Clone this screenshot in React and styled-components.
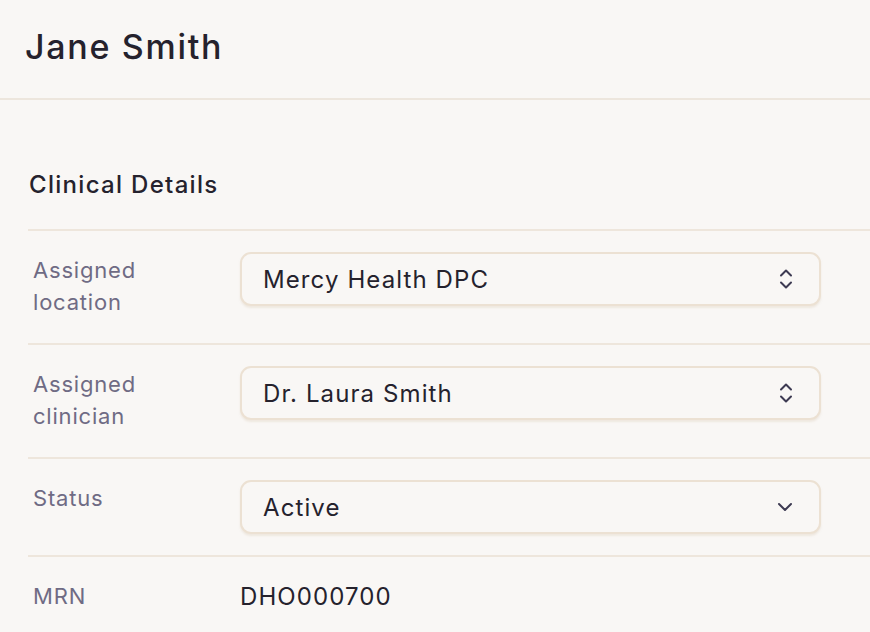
import React from "react";
import styled, { createGlobalStyle } from "styled-components";

const Global = createGlobalStyle`
  html, body { margin: 0; padding: 0; background: #f9f7f5; }
  body { font-family: Inter, "Noto Sans", sans-serif; color: #25222d; }
`;

const Page = styled.div`
  width: 870px;
  min-height: 632px;
  background: #f9f7f5;
  overflow: hidden;
`;

const Header = styled.header`
  height: 100px;
  display: flex;
  align-items: center;
  padding-left: 25px;
  border-bottom: 2px solid #ede6dd;
  box-sizing: border-box;
`;

const Title = styled.h1`
  margin: 0;
  font-size: 34px;
  font-weight: 500;
  letter-spacing: 1.7px;
  color: #25222d;
  padding-bottom: 6px;
`;

const Section = styled.section`
  padding: 69px 0 0 28px;
`;

const SectionTitle = styled.h2`
  margin: 0 0 0 1px;
  height: 60px;
  font-size: 24px;
  font-weight: 500;
  letter-spacing: 1.3px;
  line-height: 32px;
  color: #25222d;
`;

const Row = styled.div`
  display: grid;
  grid-template-columns: 212px 581px 1fr;
  padding: 21px 0;
  border-top: 2px solid #eee6dc;
`;

const Label = styled.div`
  padding: 2px 0 4px 5px;
  font-size: 22px;
  letter-spacing: 0.8px;
  line-height: 32px;
  color: #6f6b84;
  white-space: pre-line;
`;

const SelectBox = styled.div`
  height: 54px;
  box-sizing: border-box;
  border: 2px solid #ece1d3;
  border-radius: 11px;
  background: #f9f7f5;
  box-shadow: 0 2px 2px rgba(220, 205, 185, 0.35);
  display: flex;
  align-items: center;
  justify-content: space-between;
  padding: 0 26px 0 21px;
  font-size: 24px;
  letter-spacing: 1.1px;
  color: #25222d;
`;

const Value = styled.div`
  padding-top: 3px;
  font-size: 24px;
  letter-spacing: 1.1px;
  line-height: 32px;
  color: #25222d;
`;

const UpDown = () => (
  <svg width="14" height="20" viewBox="0 0 14 20" fill="none" stroke="#3d3a52" strokeWidth="2" strokeLinecap="round" strokeLinejoin="round">
    <path d="M2 6.5 L7 1.5 L12 6.5" />
    <path d="M2 13.5 L7 18.5 L12 13.5" />
  </svg>
);

const Down = () => (
  <svg width="16" height="10" viewBox="0 0 16 10" fill="none" stroke="#3d3a52" strokeWidth="2" strokeLinecap="round" strokeLinejoin="round">
    <path d="M2 2 L8 8 L14 2" />
  </svg>
);

const Select = ({ value, single }) => (
  <SelectBox>
    <span>{value}</span>
    {single ? <Down /> : <UpDown />}
  </SelectBox>
);

export default function App() {
  return (
    <Page>
      <Global />
      <Header>
        <Title>Jane Smith</Title>
      </Header>
      <Section>
        <SectionTitle>Clinical Details</SectionTitle>
        <Row>
          <Label>{"Assigned\nlocation"}</Label>
          <Select value="Mercy Health DPC" />
        </Row>
        <Row>
          <Label>{"Assigned\nclinician"}</Label>
          <Select value="Dr. Laura Smith" />
        </Row>
        <Row>
          <Label>Status</Label>
          <Select value="Active" single />
        </Row>
        <Row>
          <Label>MRN</Label>
          <Value>DHO000700</Value>
        </Row>
      </Section>
    </Page>
  );
}
